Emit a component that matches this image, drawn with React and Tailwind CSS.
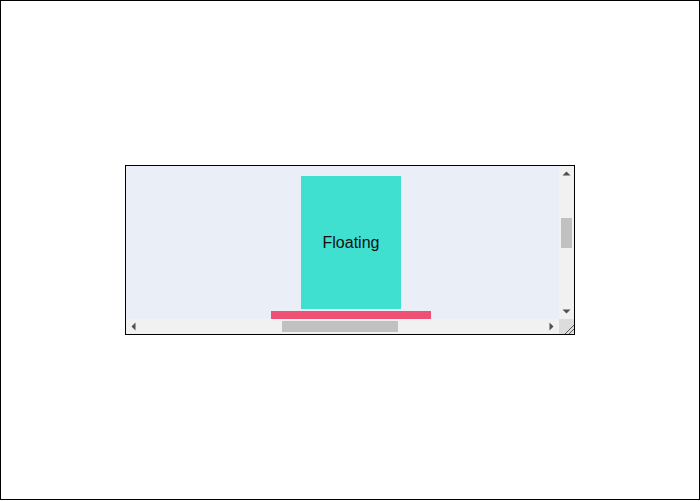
import React from "react";

function Arrow({ points }) {
  return (
    <svg width="15" height="15" viewBox="0 0 15 15" className="block">
      <polygon points={points} fill="#505050" />
    </svg>
  );
}

export default function App() {
  return (
    <div className="w-[700px] h-[500px] border border-black bg-white flex items-center justify-center" style={{ fontFamily: '"Liberation Sans", Arial, sans-serif' }}>
      <div className="w-[450px] h-[170px] border border-black grid grid-cols-[433px_15px] grid-rows-[153px_15px]">
        <div className="overflow-hidden bg-[#eaeef6] pt-[10px] pl-[145px]">
          <div className="w-[160px] flex flex-col items-center gap-[2px]">
            <div className="w-[100px] h-[133px] shrink-0 bg-[#40e0d0] flex items-center justify-center text-[16px] text-[#111]">
              Floating
            </div>
            <div className="w-[160px] h-[20px] shrink-0 bg-[#ef5073]" />
          </div>
        </div>
        <div className="bg-[#f1f1f1] flex flex-col">
          <Arrow points="3.5,9.5 7.5,5.5 11.5,9.5" />
          <div className="flex-1 px-[2px]">
            <div className="mt-[37px] h-[30px] bg-[#c1c1c1]" />
          </div>
          <Arrow points="3.5,5.5 7.5,9.5 11.5,5.5" />
        </div>
        <div className="bg-[#f1f1f1] flex">
          <Arrow points="9.5,3.5 5.5,7.5 9.5,11.5" />
          <div className="flex-1 py-[2px]">
            <div className="ml-[141px] w-[116px] h-full bg-[#c1c1c1]" />
          </div>
          <Arrow points="5.5,3.5 9.5,7.5 5.5,11.5" />
        </div>
        <div className="bg-[#dcdcdc]">
          <svg width="15" height="15" viewBox="0 0 15 15" className="block">
            <line x1="6" y1="15" x2="15" y2="6" stroke="#555" strokeWidth="1" />
            <line x1="10" y1="15" x2="15" y2="10" stroke="#555" strokeWidth="1" />
          </svg>
        </div>
      </div>
    </div>
  );
}
